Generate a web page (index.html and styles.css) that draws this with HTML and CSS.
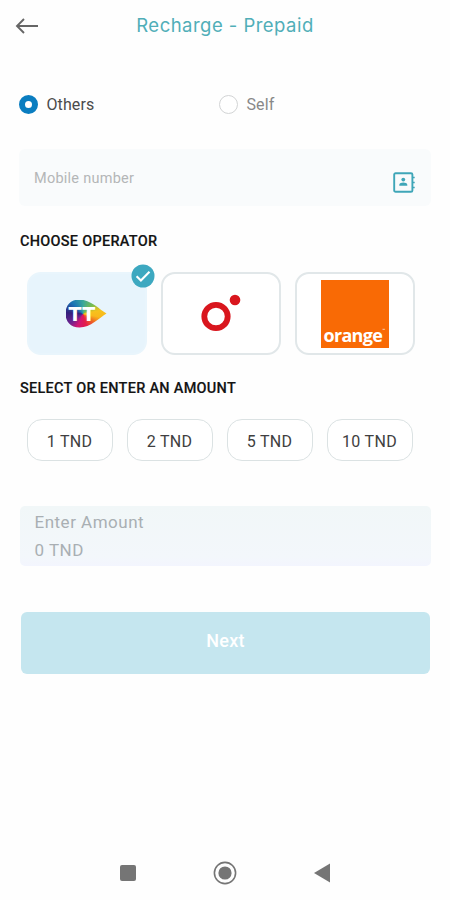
FILE: index.html
```html
<!DOCTYPE html>
<html lang="en">
<head>
<meta charset="utf-8">
<title>Recharge - Prepaid</title>
<link rel="stylesheet" href="styles.css">
</head>
<body>
<div class="screen">
  <header class="topbar">
    <svg class="back" width="24" height="18" viewBox="0 0 24 18"><path d="M23 9H2M9 2L2 9l7 7" fill="none" stroke="#666" stroke-width="1.9"/></svg>
    <h1 class="title">Recharge - Prepaid</h1>
  </header>

  <div class="radios">
    <label class="radio radio-on"><span class="dot"></span><span class="radio-text">Others</span></label>
    <label class="radio"><span class="dot"></span><span class="radio-text">Self</span></label>
  </div>

  <div class="field">
    <span class="placeholder">Mobile number</span>
    <svg class="contacts" width="22" height="22" viewBox="0 0 22 22">
      <rect x="1.2" y="1.2" width="18.2" height="18.6" rx="1.4" fill="none" stroke="#3fa6b8" stroke-width="1.9"/>
      <path d="M19.5 5.5h2.2M19.5 10.5h2.2M19.5 15.5h2.2" stroke="#3fa6b8" stroke-width="1.7"/>
      <circle cx="10.3" cy="7.6" r="1.9" fill="#3fa6b8"/>
      <path d="M6.3 13.8v-1c0-1.5 2.2-2.3 4-2.3s4 .8 4 2.3v1z" fill="#3fa6b8"/>
    </svg>
  </div>

  <h2 class="heading heading-operator">CHOOSE OPERATOR</h2>
  <div class="operators">
    <div class="card card-on">
      <div class="tt"><span class="tt-text">TT</span></div>
      <svg class="check" width="24" height="24" viewBox="0 0 24 24"><circle cx="12" cy="12" r="11.5" fill="#3da8c0"/><path d="M5.6 12.3l4.3 4.2 8.6-8.8" fill="none" stroke="#fff" stroke-width="2.1"/></svg>
    </div>
    <div class="card">
      <svg class="ooredoo" width="40" height="38" viewBox="0 0 40 38"><circle cx="15" cy="22.5" r="11.7" fill="none" stroke="#d9161e" stroke-width="5.8"/><circle cx="34" cy="6" r="5.3" fill="#d9161e"/></svg>
    </div>
    <div class="card">
      <div class="orange"><span class="orange-text">orange</span><span class="tm">™</span></div>
    </div>
  </div>

  <h2 class="heading heading-amount">SELECT OR ENTER AN AMOUNT</h2>
  <div class="chips">
    <div class="chip">1 TND</div>
    <div class="chip">2 TND</div>
    <div class="chip">5 TND</div>
    <div class="chip">10 TND</div>
  </div>

  <div class="amount">
    <span class="amount-label">Enter Amount</span>
    <span class="amount-value">0 TND</span>
  </div>

  <div class="next">Next</div>

  <nav class="navbar">
    <svg width="24" height="24" viewBox="0 0 24 24"><rect x="4" y="4" width="16" height="16" rx="2" fill="#757575"/></svg>
    <svg width="24" height="24" viewBox="0 0 24 24"><circle cx="12" cy="12" r="10.6" fill="none" stroke="#757575" stroke-width="1.6"/><circle cx="12" cy="12" r="6.6" fill="#757575"/></svg>
    <svg width="24" height="24" viewBox="0 0 24 24"><path d="M4 12L20 2.5v19z" fill="#757575"/></svg>
  </nav>
</div>
</body>
</html>
```

FILE: styles.css
```css
* { box-sizing: border-box; }
body { margin: 0; background: #fefefe; font-family: Roboto, "Liberation Sans", sans-serif; }
.screen { width: 450px; height: 900px; padding: 0 19px; display: flex; flex-direction: column; overflow: hidden; }

.topbar { height: 51px; display: grid; grid-template-columns: 24px 1fr 24px; align-items: center; margin: 0 -4px; }
.title { margin: 0; padding-bottom: 2px; text-align: center; font: 400 18.5px/24px Inter, Lato, sans-serif; letter-spacing: 0.47px; color: #50aeb8; }

.radios { margin-top: 41px; height: 24px; display: grid; grid-template-columns: 200px 200px; }
.radio { height: 24px; display: flex; align-items: center; gap: 8px; color: #888; }
.dot { width: 19px; height: 19px; border-radius: 50%; border: 1.5px solid #d2d4d5; background: #fff; }
.radio-on .dot { border: 6px solid #0a7dc0; }
.radio-on { color: #4b4b4b; }
.radio-text { font-size: 16px; line-height: 24px; padding: 2px 0 0 0.5px; letter-spacing: 0.1px; }

.field { margin-top: 33px; height: 57px; border-radius: 6px; background: #f9fbfc; display: flex; justify-content: space-between; padding: 0 16px 0 15px; }
.placeholder { font-size: 14.5px; line-height: 60px; color: #b4b6b7; letter-spacing: 0.25px; }
.contacts { margin-top: 23px; }

.heading { margin: 0; padding-left: 1px; font-size: 14.5px; font-weight: 500; line-height: 20px; color: #141414; letter-spacing: 0.27px; -webkit-text-stroke: 0.15px #141414; }
.heading-operator { margin-top: 26px; }
.heading-amount { margin-top: 24px; }

.operators { margin-top: 20px; display: flex; gap: 14px; padding-left: 7.5px; }
.card { position: relative; width: 120px; height: 83px; border: 2px solid #e1e7e9; border-radius: 14px; background: #fff; display: flex; justify-content: center; align-items: center; }
.card-on { background: #e7f4fc; border-color: #e9f5fc; }
.check { position: absolute; right: -10px; top: -10px; }
.tt { width: 41px; height: 28px; margin: 0 1px 0 0; clip-path: path("M41 14C34 10 25 0 14 0C5 0 0 6 0 14C0 22 5 28 14 28C25 28 34 18 41 14Z"); background: conic-gradient(from 0deg at 17px 14px, #3aa79b 0deg, #7dbd4b 50deg, #f6c21c 78deg, #f9b81b 100deg, #ee6b21 125deg, #e31c4b 165deg, #d11573 205deg, #6b2390 235deg, #33207c 275deg, #1c74b5 315deg, #3aa79b 360deg); display: flex; align-items: center; }
.tt-text { margin-left: 3px; font: 700 19px/28px "DejaVu Sans", sans-serif; letter-spacing: 0.3px; color: #fff; }
.ooredoo { margin-bottom: 1px; }
.orange { width: 68px; height: 68px; background: #f96a05; display: flex; align-items: flex-end; padding: 0 0 2px 3px; color: #fff; }
.orange-text { font: 700 18px/22px "Open Sans", sans-serif; letter-spacing: -0.7px; }
.tm { font-size: 5px; line-height: 6px; align-self: flex-end; margin-bottom: 13px; }

.chips { margin-top: 20px; display: flex; gap: 14px; padding-left: 7.5px; }
.chip { width: 86px; height: 42px; border: 1.5px solid #dbe2e3; border-radius: 15px; background: #fff; text-align: center; font-size: 16px; letter-spacing: 0.3px; line-height: 43px; color: #404040; }

.amount { margin: 45px 0 0 1px; width: 411px; height: 60px; border-radius: 5px; background: linear-gradient(#f1f7f8, #f3f7fb 85%, #f3f5fe); padding: 2px 0 0 14.5px; display: flex; flex-direction: column; }
.amount-label, .amount-value { font-size: 17px; line-height: 28px; letter-spacing: 0.5px; color: #a9afb3; }

.next { margin: 46px 1px 0 2px; height: 62px; border-radius: 6px; background: #c5e6ef; color: #fff; text-align: center; font: 500 18px/58px Roboto, sans-serif; letter-spacing: 0.2px; }

.navbar { margin-top: auto; height: 54px; display: flex; justify-content: center; align-items: center; gap: 73px; }
```
